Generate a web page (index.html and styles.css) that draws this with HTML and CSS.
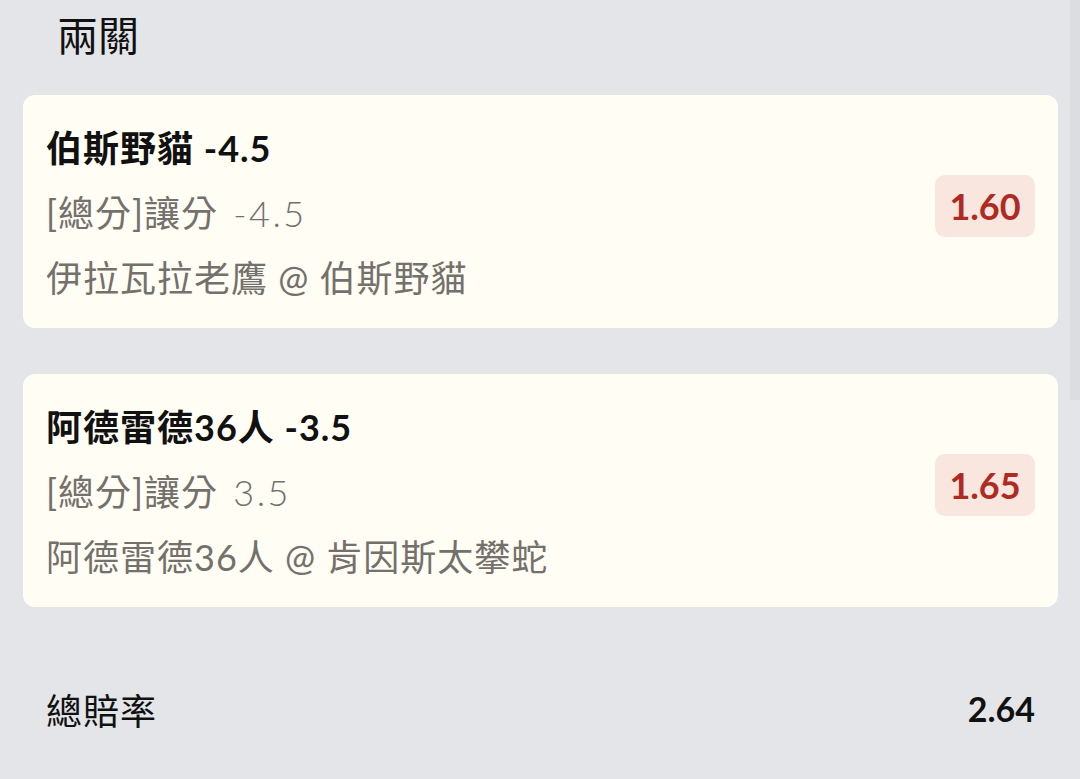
FILE: index.html
```html
<!DOCTYPE html>
<html lang="zh-Hant">
<head>
<meta charset="utf-8">
<title>兩關</title>
<link rel="stylesheet" href="styles.css">
</head>
<body>
<div class="page">
  <h1 class="title">兩關</h1>
  <div class="cards">
    <div class="card">
      <div class="info">
        <div class="pick">伯斯野貓 -4.5</div>
        <div class="market">[總分]讓分 <span class="num">-4.5</span></div>
        <div class="match">伊拉瓦拉老鷹 @ 伯斯野貓</div>
      </div>
      <div class="odds">1.60</div>
    </div>
    <div class="card">
      <div class="info">
        <div class="pick">阿德雷德36人 -3.5</div>
        <div class="market">[總分]讓分 <span class="num">3.5</span></div>
        <div class="match">阿德雷德36人 @ 肯因斯太攀蛇</div>
      </div>
      <div class="odds">1.65</div>
    </div>
  </div>
  <div class="total">
    <span class="total-label">總賠率</span>
    <span class="total-value">2.64</span>
  </div>
</div>
<div class="scrollbar"></div>
</body>
</html>
```
FILE: styles.css
```css
html, body {
  margin: 0;
  padding: 0;
  background: #e4e5e8;
  height: 100%;
  overflow: hidden;
}
body {
  font-family: Lato, "Noto Sans CJK TC", sans-serif;
  color: #111;
  position: relative;
}
.page {
  padding: 8px 22px 0 23px;
}
.title {
  margin: 0;
  padding-left: 34px;
  font-family: "Noto Sans CJK TC", sans-serif;
  font-weight: 400;
  font-size: 41px;
  line-height: 50px;
  color: #111;
}
.cards {
  margin-top: 37px;
  display: flex;
  flex-direction: column;
  gap: 46px;
}
.card {
  background: #fffdf4;
  border-radius: 12px;
  height: 233px;
  box-sizing: border-box;
  padding: 29px 23px 22px 23px;
  display: flex;
  align-items: center;
  justify-content: space-between;
}
.info {
  display: flex;
  flex-direction: column;
  gap: 17px;
  align-self: flex-start;
}
.pick, .market, .match {
  font-size: 36px;
  line-height: 48px;
  letter-spacing: 1px;
  white-space: nowrap;
}
.pick {
  font-weight: 700;
  color: #111;
}
.market, .match {
  font-weight: 400;
  color: #74706b;
}
.market {
  word-spacing: 5px;
}
.num {
  font-weight: 300;
  letter-spacing: 2.5px;
}
.odds {
  background: #f8e6df;
  color: #ae2a22;
  font-weight: 700;
  font-size: 36px;
  border-radius: 10px;
  width: 100px;
  height: 62px;
  display: flex;
  align-items: center;
  justify-content: center;
  margin-bottom: 19px;
}
.total {
  margin-top: 78px;
  display: flex;
  justify-content: space-between;
  align-items: center;
  padding: 0 23px;
}
.total-label {
  font-family: "Noto Sans CJK TC", sans-serif;
  font-size: 36px;
  letter-spacing: 1px;
  line-height: 48px;
  color: #111;
}
.total-value {
  font-size: 34px;
  font-weight: 700;
  line-height: 48px;
  color: #111;
}
.scrollbar {
  position: absolute;
  top: 0;
  right: 0;
  width: 10px;
  height: 400px;
  background: #dcdde0;
}
```
